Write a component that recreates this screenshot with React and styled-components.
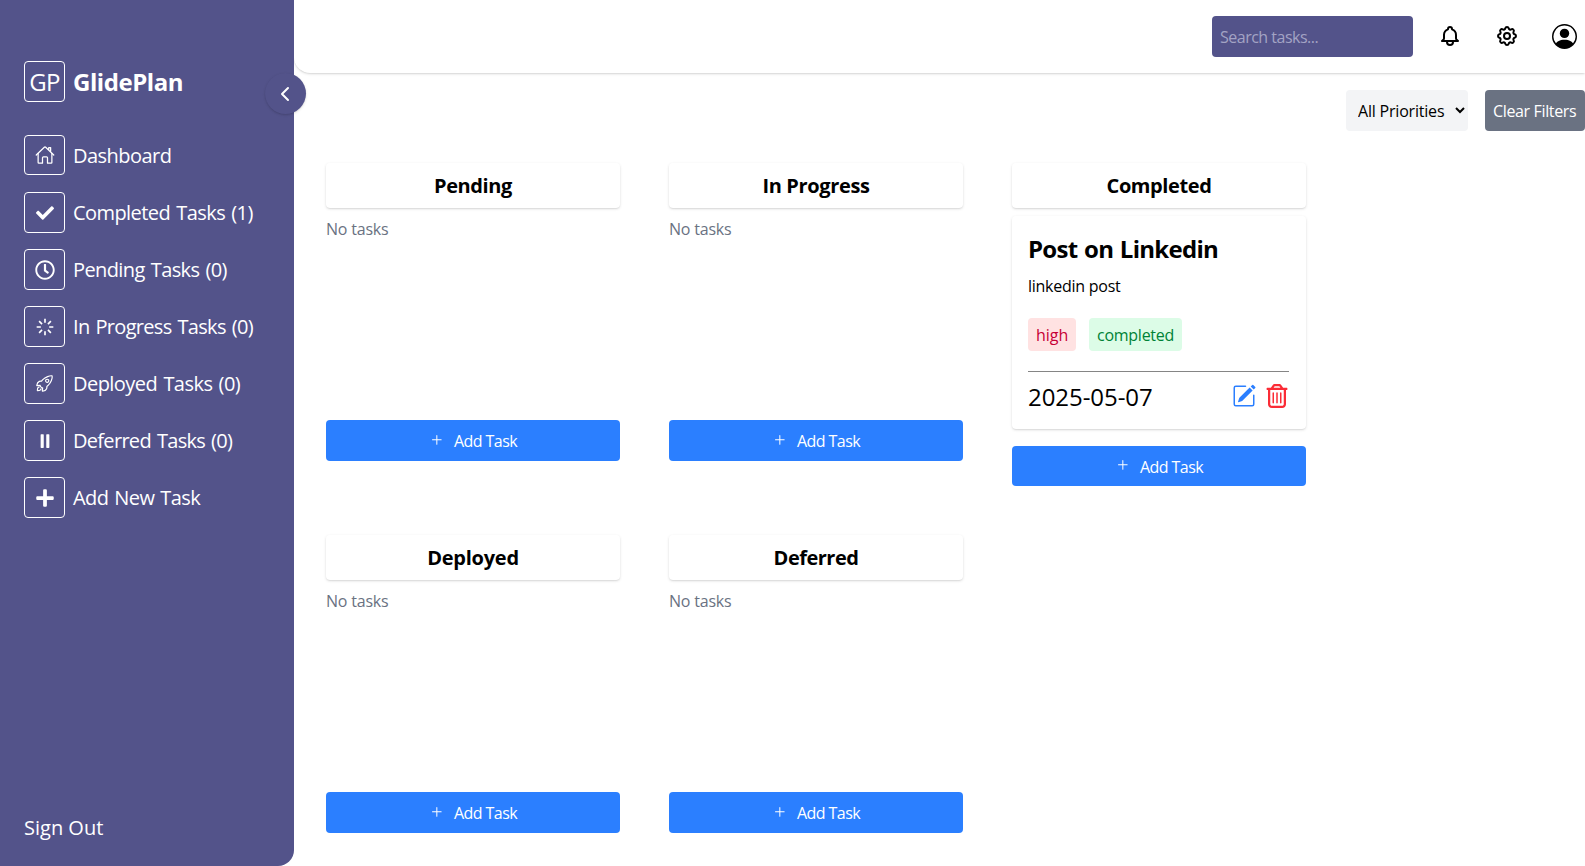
import React from 'react';
import styled, { createGlobalStyle } from 'styled-components';
import { IoHomeOutline, IoRocketOutline, IoPause } from 'react-icons/io5';
import { FaCheck, FaRegClock, FaPlus } from 'react-icons/fa';
import { FaRegTrashCan } from 'react-icons/fa6';
import { BiLoader } from 'react-icons/bi';
import { GoPlus } from 'react-icons/go';
import { BsPersonCircle, BsPencilSquare } from 'react-icons/bs';
import { HiOutlineBell, HiOutlineCog } from 'react-icons/hi';
import { LuChevronLeft } from 'react-icons/lu';

const Global = createGlobalStyle`
  *, *::before, *::after { box-sizing: border-box; }
  body { margin: 0; background: #fff; color: #000; font-family: "Open Sans", "Noto Sans", sans-serif; }
  button, input, select { font: inherit; color: inherit; border: 0; }
  h1, h2, h3, p { margin: 0; }
  svg { display: block; flex: none; }
`;

const purple = '#53538a';
const softShadow = '0 1px 3px rgba(0,0,0,.12), 0 1px 2px -1px rgba(0,0,0,.2)';

const Page = styled.div`display: flex; height: 866px; overflow: hidden;`;
const Sidebar = styled.aside`
  position: relative; width: 294px; flex: none; padding: 61px 24px 0; color: #fff;
  display: flex; flex-direction: column; background: ${purple}; border-bottom-right-radius: 16px;
`;
const Text = styled.span`letter-spacing: ${p => p.$ls || 0}px; word-spacing: 1.5px; white-space: nowrap;`;
const Brand = styled.div`display: flex; align-items: center; gap: 8px; margin-bottom: 33px;`;
const IconBox = styled.span`
  width: 41px; height: ${p => p.$h || 41}px; flex: none; border: 1px solid #fff; border-radius: 4px;
  display: flex; align-items: center; justify-content: center; font-size: 24px; line-height: 39px;
`;
const BrandName = styled.h1`font-size: 24px; font-weight: 700; line-height: 41px; letter-spacing: -0.45px;`;
const Nav = styled.nav`display: flex; flex-direction: column; gap: 16px;`;
const NavItem = styled.div`height: 41px; display: flex; align-items: flex-start; gap: 8px; font-size: 20px; line-height: 42px;`;
const SignOut = styled.div`margin-top: auto; margin-bottom: 23px; font-size: 20px; line-height: 30px;`;
const Toggle = styled.button`
  position: absolute; top: 73px; left: 265px; width: 41px; height: 41px; border-radius: 50%; padding: 0 2px 0 0;
  background: ${purple}; display: flex; align-items: center; justify-content: center; box-shadow: ${softShadow};
`;

const Main = styled.main`flex: 1; min-width: 0; display: flex; flex-direction: column;`;
const Header = styled.header`
  height: 73px; display: flex; justify-content: flex-end; align-items: flex-start; padding: 16px 8px 0 0;
  border-bottom-left-radius: 16px; box-shadow: ${softShadow};
`;
const Search = styled.input`
  width: 201px; height: 41px; padding: 1px 8px 0; border-radius: 4px; background: ${purple}; color: #fff;
  font-size: 16px; letter-spacing: -0.5px;
  &::placeholder { color: #a3a3c4; opacity: 1; }
`;
const HeaderIcons = styled.div`display: flex; align-items: flex-start; padding-top: 8px; margin-left: 25px; gap: 33px;`;
const Filters = styled.div`display: flex; justify-content: flex-end; gap: 17px; padding-top: 17px;`;
const Select = styled.select`
  width: 122px; height: 41px; padding: 1px 0 0 8px; border-radius: 4px; background: #f3f4f6; font-size: 16px; letter-spacing: -0.2px;
`;
const Clear = styled.button`
  width: 100px; height: 41px; padding: 1px 0 0 8px; text-align: left; white-space: nowrap; border-radius: 4px;
  background: #6a7282; color: #fff; font-size: 16px; letter-spacing: -0.35px;
`;
const Board = styled.div`display: grid; grid-template-columns: repeat(3, 294px); gap: 49px; padding: 32px 32px 0;`;
const Column = styled.section`display: flex; flex-direction: column;`;
const ColumnTitle = styled.h2`
  height: 45px; border-radius: 4px; text-align: center; font-size: 20px; font-weight: 700; line-height: 46px;
  letter-spacing: ${p => p.$ls || 0}px; box-shadow: ${softShadow};
`;
const List = styled.div`height: ${p => p.$filled ? 230 : 204}px; margin-top: 8px;`;
const Empty = styled.p`color: #6a7282; font-size: 16px; line-height: 26px; letter-spacing: -0.2px;`;
const AddTask = styled.button`
  height: ${p => p.$h || 41}px; padding: 0; border-radius: 4px; background: #2b7fff; color: #fff; font-size: 16px;
  display: flex; align-items: center; justify-content: center; gap: 9px; letter-spacing: -0.55px;
  & svg { margin-top: -2px; } & span { margin-top: 1px; }
`;
const Card = styled.article`height: 213px; padding: 15px 17px 16px 16px; border-radius: 4px; box-shadow: ${softShadow};`;
const CardTitle = styled.h3`font-size: 24px; font-weight: 700; line-height: 36px; letter-spacing: -0.7px; word-spacing: 1px;`;
const CardText = styled.p`font-size: 16px; line-height: 24px; margin-top: 7px; letter-spacing: -0.26px;`;
const Tags = styled.div`display: flex; gap: 13px; margin-top: 20px;`;
const Tag = styled.span`
  width: ${p => p.$w}px; height: 33px; padding-left: 8px; border-radius: 4px; font-size: 16px; line-height: 34px;
  background: ${p => p.$bg}; color: ${p => p.$fg}; letter-spacing: ${p => p.$ls}px;
`;
const CardFoot = styled.footer`
  margin-top: 20px; border-top: 1px solid #858585; display: flex; justify-content: space-between; align-items: flex-start;
  padding-top: 7px; font-size: 24px; line-height: 36px; letter-spacing: -0.06px;
`;
const Actions = styled.div`display: flex; gap: 9px; padding-top: 5px;`;

const nav = [
  ['Dashboard', IoHomeOutline, 20, -0.53, 40],
  ['Completed Tasks (1)', FaCheck, 18, -0.57],
  ['Pending Tasks (0)', FaRegClock, 20, -0.61],
  ['In Progress Tasks (0)', BiLoader, 20, -0.69],
  ['Deployed Tasks (0)', IoRocketOutline, 19, -0.54],
  ['Deferred Tasks (0)', IoPause, 20, -0.7],
  ['Add New Task', FaPlus, 20, -0.62],
];
const columns = [
  ['Pending', -0.4], ['In Progress', -0.35], ['Completed', -0.4], ['Deployed', -0.25], ['Deferred', -0.5],
];

export default function App() {
  return (
    <Page>
      <Global />
      <Sidebar>
        <Brand><IconBox><Text $ls={-0.75}>GP</Text></IconBox><BrandName>GlidePlan</BrandName></Brand>
        <Nav>
          {nav.map(([label, Icon, size, ls, h]) => (
            <NavItem key={label}><IconBox $h={h}><Icon size={size} /></IconBox><Text $ls={ls}>{label}</Text></NavItem>
          ))}
        </Nav>
        <SignOut>Sign Out</SignOut>
        <Toggle aria-label="Collapse sidebar"><LuChevronLeft size={24} /></Toggle>
      </Sidebar>
      <Main>
        <Header>
          <Search placeholder="Search tasks..." />
          <HeaderIcons><HiOutlineBell size={24} /><HiOutlineCog size={24} /><BsPersonCircle size={25} /></HeaderIcons>
        </Header>
        <Filters>
          <Select defaultValue="all"><option value="all">All Priorities</option></Select>
          <Clear>Clear Filters</Clear>
        </Filters>
        <Board>
          {columns.map(([name, ls]) => {
            const filled = name === 'Completed';
            return (
              <Column key={name}>
                <ColumnTitle $ls={ls}>{name}</ColumnTitle>
                <List $filled={filled}>
                  {filled ? (
                    <Card>
                      <CardTitle>Post on Linkedin</CardTitle>
                      <CardText>linkedin post</CardText>
                      <Tags>
                        <Tag $w={48} $bg="#ffe2e2" $fg="#c70036" $ls={0}>high</Tag>
                        <Tag $w={93} $bg="#dcfce7" $fg="#008236" $ls={-0.26}>completed</Tag>
                      </Tags>
                      <CardFoot>
                        <span>2025-05-07</span>
                        <Actions><BsPencilSquare size={24} color="#2b7fff" /><FaRegTrashCan size={24} color="#fb2c36" /></Actions>
                      </CardFoot>
                    </Card>
                  ) : <Empty>No tasks</Empty>}
                </List>
                <AddTask $h={filled ? 40 : 41}><GoPlus size={16} /><span>Add Task</span></AddTask>
              </Column>
            );
          })}
        </Board>
      </Main>
    </Page>
  );
}
